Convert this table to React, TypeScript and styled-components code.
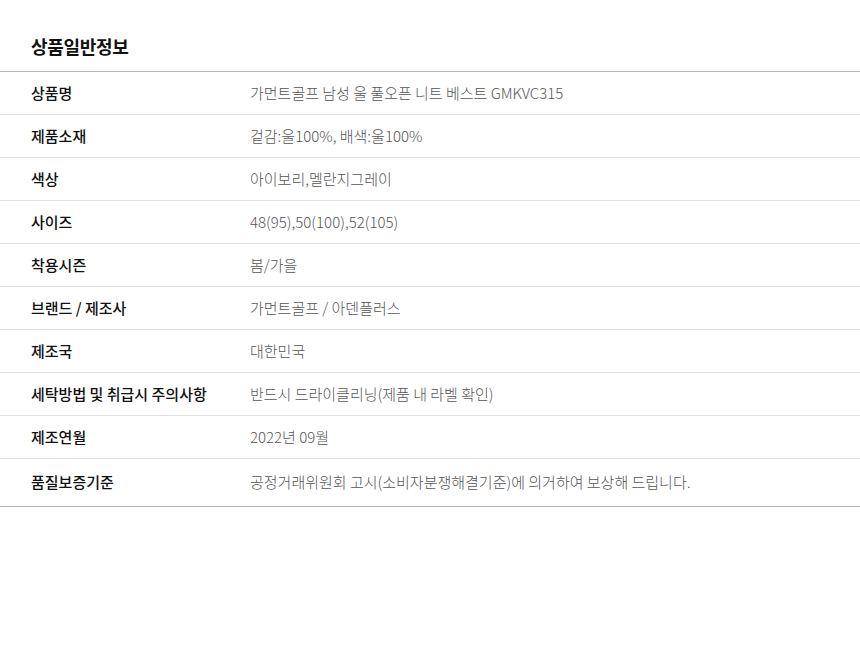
import styled, { createGlobalStyle } from 'styled-components';

const GlobalStyle = createGlobalStyle`
  html, body {
    margin: 0;
    padding: 0;
    background: #fff;
  }
  body {
    font-family: "Noto Sans CJK KR", "Noto Sans", sans-serif;
  }
`;

const Section = styled.section`
  width: 860px;
  padding-top: 33px;
`;

const Title = styled.h2`
  margin: 0;
  padding: 0 0 12px 31px;
  height: 26px;
  line-height: 26px;
  font-size: 18px;
  font-weight: 700;
  color: #111;
  letter-spacing: -0.3px;
`;

const Table = styled.div`
  border-top: 1px solid #b4b4b4;
  border-bottom: 1px solid #b4b4b4;
`;

const Row = styled.div<{ $last?: boolean }>`
  display: grid;
  grid-template-columns: 250px 1fr;
  align-items: center;
  box-sizing: border-box;
  height: ${p => (p.$last ? '47px' : '43px')};
  padding-bottom: ${p => (p.$last ? '3px' : '2px')};
  border-bottom: ${p => (p.$last ? 'none' : '1px solid #e2e2e2')};
`;

const Label = styled.div`
  padding-left: 31px;
  font-size: 15px;
  font-weight: 500;
  color: #111;
`;

const Value = styled.div`
  font-size: 15px;
  font-weight: 300;
  color: #555;
`;

const rows: [string, string][] = [
  ['상품명', '가먼트골프 남성 울 풀오픈 니트 베스트 GMKVC315'],
  ['제품소재', '겉감:울100%, 배색:울100%'],
  ['색상', '아이보리,멜란지그레이'],
  ['사이즈', '48(95),50(100),52(105)'],
  ['착용시즌', '봄/가을'],
  ['브랜드 / 제조사', '가먼트골프 / 아덴플러스'],
  ['제조국', '대한민국'],
  ['세탁방법 및 취급시 주의사항', '반드시 드라이클리닝(제품 내 라벨 확인)'],
  ['제조연월', '2022년 09월'],
  ['품질보증기준', '공정거래위원회 고시(소비자분쟁해결기준)에 의거하여 보상해 드립니다.'],
];

export default function App() {
  return (
    <>
      <GlobalStyle />
      <Section>
        <Title>상품일반정보</Title>
        <Table>
          {rows.map(([label, value], i) => (
            <Row key={label} $last={i === rows.length - 1}>
              <Label>{label}</Label>
              <Value>{value}</Value>
            </Row>
          ))}
        </Table>
      </Section>
    </>
  );
}
